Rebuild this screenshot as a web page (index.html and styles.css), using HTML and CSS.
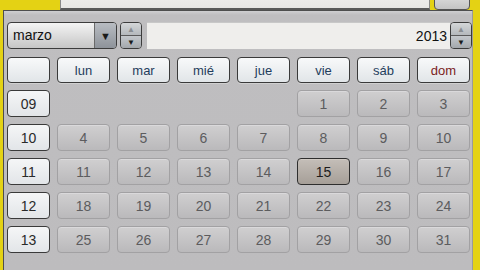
FILE: index.html
```html
<!DOCTYPE html>
<html lang="es">
<head>
<meta charset="utf-8">
<link rel="stylesheet" href="styles.css">
</head>
<body>
<div class="top">
  <div class="topinput"></div>
  <div class="topbtn"></div>
</div>
<div class="panel">
  <div class="controls">
    <div class="select"><span class="seltext">marzo</span><span class="selarrow">▼</span></div>
    <div class="spin"><span class="up">▲</span><span class="down">▼</span></div>
    <div class="year">2013</div>
    <div class="spin yearspin"><span class="up">▲</span><span class="down">▼</span></div>
  </div>
  <div class="cal">
    <div class="hd"></div>
    <div class="hd">lun</div>
    <div class="hd">mar</div>
    <div class="hd">mié</div>
    <div class="hd">jue</div>
    <div class="hd">vie</div>
    <div class="hd">sáb</div>
    <div class="hd sun">dom</div>

    <div class="wk">09</div>
    <div></div><div></div><div></div><div></div>
    <div class="d">1</div><div class="d">2</div><div class="d">3</div>

    <div class="wk">10</div>
    <div class="d">4</div><div class="d">5</div><div class="d">6</div><div class="d">7</div>
    <div class="d">8</div><div class="d">9</div><div class="d">10</div>

    <div class="wk">11</div>
    <div class="d">11</div><div class="d">12</div><div class="d">13</div><div class="d">14</div>
    <div class="d sel">15</div><div class="d">16</div><div class="d">17</div>

    <div class="wk">12</div>
    <div class="d">18</div><div class="d">19</div><div class="d">20</div><div class="d">21</div>
    <div class="d">22</div><div class="d">23</div><div class="d">24</div>

    <div class="wk">13</div>
    <div class="d">25</div><div class="d">26</div><div class="d">27</div><div class="d">28</div>
    <div class="d">29</div><div class="d">30</div><div class="d">31</div>
  </div>
</div>
</body>
</html>
```

FILE: styles.css
```css
html, body {
  margin: 0;
  padding: 0;
}
body {
  width: 480px;
  height: 270px;
  overflow: hidden;
  background: #e4d214;
  font-family: "Liberation Sans", Arial, sans-serif;
}
.top {
  height: 10px;
  display: flex;
  align-items: flex-end;
  padding-left: 60px;
  gap: 4px;
  overflow: hidden;
}
.topinput {
  width: 370px;
  height: 20px;
  flex: none;
  background: linear-gradient(#f3f2f0, #e8e7e5);
  border: 1px solid #8a8a8a;
  border-bottom: 2px solid #5a5a5a;
  box-sizing: border-box;
}
.topbtn {
  width: 36px;
  height: 20px;
  flex: none;
  box-sizing: border-box;
  border: 1px solid #555;
  border-radius: 4px;
  background: linear-gradient(#e6e6e6, #c4c4c4);
}
.panel {
  margin-left: 3px;
  width: 470px;
  height: 260px;
  box-sizing: border-box;
  border: 1px solid #4e4e4e;
  border-bottom: none;
  border-right-color: #9a9a9a;
  background: linear-gradient(#cfcfd1 0, #bfbec0 4px, #bdbcbe 100%);
  padding: 11px 0 0 3px;
}
.controls {
  display: flex;
  height: 27px;
  align-items: stretch;
}
.select {
  width: 110px;
  box-sizing: border-box;
  border: 1px solid #3c3c3c;
  border-radius: 4px;
  background: linear-gradient(#f4f4f4, #d8d8d8 60%, #c6c6c6);
  display: flex;
  overflow: hidden;
}
.seltext {
  flex: 1;
  font-size: 14px;
  color: #111;
  padding-left: 5px;
  line-height: 25px;
}
.selarrow {
  width: 21px;
  border-left: 1px solid #6a6a6a;
  background: linear-gradient(#b8bcc2, #8e939a);
  font-size: 11px;
  color: #1a1a1a;
  display: flex;
  align-items: center;
  justify-content: center;
}
.spin {
  width: 22px;
  margin-left: 3px;
  box-sizing: border-box;
  border: 1px solid #3c3c3c;
  border-radius: 4px;
  display: flex;
  flex-direction: column;
  overflow: hidden;
  font-size: 8px;
}
.spin span {
  flex: 1;
  display: flex;
  align-items: center;
  justify-content: center;
}
.spin .up {
  background: linear-gradient(#d4d6d8, #b4b8bc);
  color: #8a8e92;
  border-bottom: 1px solid #5a5a5a;
}
.spin .down {
  background: linear-gradient(#c4c8cc, #a4a8ac);
  color: #1a1a1a;
}
.year {
  width: 303px;
  margin-left: 5px;
  box-sizing: border-box;
  background: #efeeec;
  border-top: 1px solid #c8c8c8;
  font-size: 14px;
  color: #111;
  text-align: right;
  padding-right: 3px;
  line-height: 27px;
}
.yearspin {
  margin-left: 0;
}
.cal {
  margin-top: 8px;
  display: grid;
  grid-template-columns: 43px repeat(7, 53px);
  grid-template-rows: 26px repeat(5, 27px);
  column-gap: 7px;
  row-gap: 7px;
}
.cal > div {
  box-sizing: border-box;
  display: flex;
  align-items: center;
  justify-content: center;
}
.hd {
  border: 1px solid #3a3a3a;
  border-radius: 4px;
  background: linear-gradient(#f8f9fa, #e1e5e8);
  font-size: 13px;
  color: #1f3d5c;
  box-shadow: 0 1px 0 #d0d0d0;
}
.hd.sun {
  color: #7a1c1c;
}
.wk {
  border: 1px solid #3a3a3a;
  border-radius: 4px;
  background: linear-gradient(#f5f6f7, #e2e5e8);
  font-size: 14px;
  color: #2a2a2a;
}
.d {
  border: 1px solid #a2a1a3;
  border-radius: 4px;
  background: linear-gradient(#d0cfd0, #bab9bb);
  font-size: 14px;
  color: #5c5c5e;
  box-shadow: inset 0 1px 0 #dad9db;
}
.d.sel {
  border: 1px solid #2e2e2e;
  background: linear-gradient(#c4beb8, #a69f98);
  color: #1c1c1c;
  box-shadow: inset 0 1px 0 #d0cac4;
}
```
